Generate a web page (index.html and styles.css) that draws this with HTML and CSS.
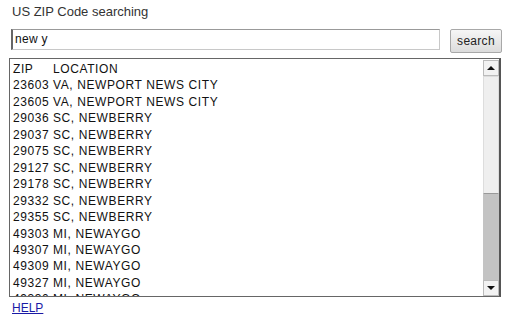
FILE: index.html
```html
<!DOCTYPE html>
<html lang="en">
<head>
    <meta charset="UTF-8">
    <title>US ZIP Code searching</title>
    <link rel="stylesheet" href="styles.css">
</head>
<body>
    <div class="title">US ZIP Code searching</div>
    <div class="search-row">
        <div class="field">new y</div>
        <div class="button">search</div>
    </div>
    <div class="results">
        <div class="rows">
            <div class="row"><span class="zip">ZIP</span>LOCATION</div>
            <div class="row"><span class="zip">23603</span>VA, NEWPORT NEWS CITY</div>
            <div class="row"><span class="zip">23605</span>VA, NEWPORT NEWS CITY</div>
            <div class="row"><span class="zip">29036</span>SC, NEWBERRY</div>
            <div class="row"><span class="zip">29037</span>SC, NEWBERRY</div>
            <div class="row"><span class="zip">29075</span>SC, NEWBERRY</div>
            <div class="row"><span class="zip">29127</span>SC, NEWBERRY</div>
            <div class="row"><span class="zip">29178</span>SC, NEWBERRY</div>
            <div class="row"><span class="zip">29332</span>SC, NEWBERRY</div>
            <div class="row"><span class="zip">29355</span>SC, NEWBERRY</div>
            <div class="row"><span class="zip">49303</span>MI, NEWAYGO</div>
            <div class="row"><span class="zip">49307</span>MI, NEWAYGO</div>
            <div class="row"><span class="zip">49309</span>MI, NEWAYGO</div>
            <div class="row"><span class="zip">49327</span>MI, NEWAYGO</div>
            <div class="row"><span class="zip">49330</span>MI, NEWAYGO</div>
        </div>
        <div class="scrollbar">
            <div class="arrow"><span class="tri up"></span></div>
            <div class="track-top"></div>
            <div class="track-bottom"></div>
            <div class="arrow"><span class="tri down"></span></div>
        </div>
    </div>
    <a href="#help" class="help">HELP</a>
</body>
</html>
```

FILE: styles.css
```css
body {
    margin: 0;
    padding: 4px 10px 0 9px;
    font-family: 'Liberation Sans', Arial, sans-serif;
    color: #222;
    background: #fff;
}
.title {
    font-size: 13px;
    color: #333;
    padding-left: 3px;
    height: 18px;
    line-height: 15px;
}
.search-row {
    display: flex;
    align-items: flex-start;
    margin-top: 7px;
    padding-left: 2px;
}
.field {
    width: 424px;
    height: 19px;
    border: 1px solid #c8c8c8;
    border-left: 2px solid #666;
    border-top: 1px solid #999;
    font-size: 12px;
    line-height: 19px;
    padding-left: 2px;
    color: #111;
    letter-spacing: 0.3px;
}
.button {
    margin-left: 10px;
    width: 50px;
    height: 22px;
    border: 1px solid #a8a8a8;
    border-radius: 2px;
    background: linear-gradient(#f6f6f6, #dcdcdc);
    font-size: 12px;
    line-height: 22px;
    text-align: center;
    color: #222;
    letter-spacing: 0.3px;
}
.results {
    display: flex;
    margin-top: 5px;
    width: 489px;
    height: 237px;
    border: 1px solid #666;
    border-right: 2px solid #555;
    overflow: hidden;
}
.rows {
    flex: 1;
    padding: 2px 0 0 3px;
    overflow: hidden;
}
.row {
    font-size: 12px;
    letter-spacing: 0.6px;
    line-height: 16.45px;
    white-space: nowrap;
    color: #111;
}
.zip {
    display: inline-block;
    width: 40px;
}
.scrollbar {
    width: 16px;
    display: flex;
    flex-direction: column;
    padding-top: 1px;
}
.arrow {
    height: 14px;
    background: #f2f2f2;
    border: 1px solid #bbb;
    display: flex;
    align-items: center;
    justify-content: center;
}
.tri {
    width: 0;
    height: 0;
    border-left: 4px solid transparent;
    border-right: 4px solid transparent;
}
.tri.up {
    border-bottom: 4px solid #111;
}
.tri.down {
    border-top: 4px solid #111;
}
.track-top {
    height: 116px;
    background: #efefef;
    border: 1px solid #ddd;
    border-bottom: 1px solid #999;
}
.track-bottom {
    flex: 1;
    background: #c3c3c3;
}
.help {
    display: inline-block;
    margin: 4px 0 0 3px;
    font-size: 12px;
    color: #1a1aa6;
    text-decoration: underline;
}
```
